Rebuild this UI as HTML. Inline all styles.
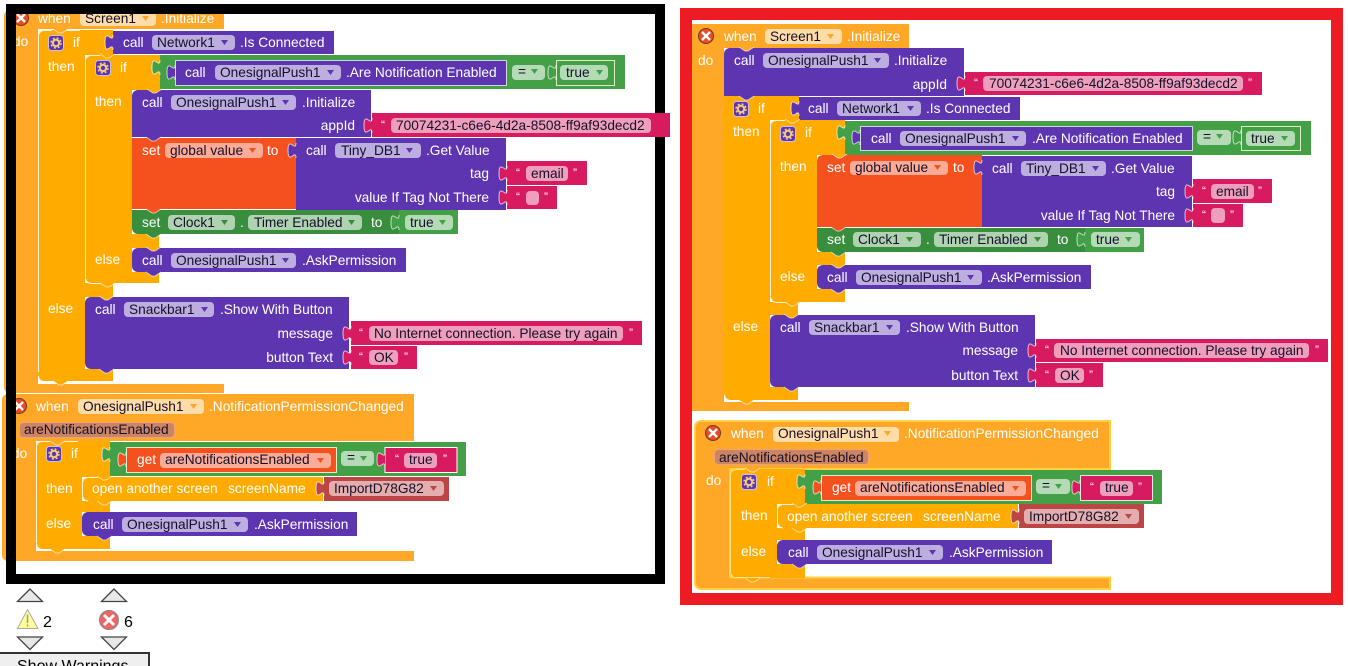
<!DOCTYPE html>
<html><head><meta charset="utf-8"><style>
html,body{margin:0;padding:0;background:#fff;width:1348px;height:666px;overflow:hidden}
svg{position:absolute;left:0;top:0;display:block}
text{font:13.7px "Liberation Sans",Arial,sans-serif;fill:#fff}
.d{fill:#14102a}
.e{text-anchor:end}
.q{font-size:12px}
.pu{fill:#bdaee0}.or{fill:#ffdca8}.pk{fill:#ef9fbc}.gr{fill:#b4dab6}.dg{fill:#afd2b1}.rd{fill:#fbab96}.ma{fill:#e4aeae}
.pa{fill:#cc8563;stroke:#eda27c}
.h{fill:none;stroke:#fff;stroke-opacity:.85;stroke-width:1}
.b{font-size:16px;fill:#000}
</style></head><body>
<svg width="1348" height="666" viewBox="0 0 1348 666" xmlns="http://www.w3.org/2000/svg">
<defs>
<path id="t" d="M0 0c0 10-8-8-8 7.500s8-2.500 8 7.500" stroke="#fff" stroke-opacity=".7"/>
<path id="n" d="M0 0l6 4h3l6-4" stroke="#fff" stroke-opacity=".6"/>
<path id="a" d="M0 0h7l-3.500 5z"/>
<g id="g"><rect x=".5" y=".5" width="15" height="15" rx="3" fill="#5e35b1" stroke="#cbbfe6"/><circle cx="8" cy="8" r="3.200" fill="none" stroke="#f3cf7e" stroke-width="2"/><circle cx="8" cy="8" r="5" fill="none" stroke="#f3cf7e" stroke-width="1.500" stroke-dasharray="2 2"/></g>
<g id="x"><circle r="7.500" fill="#ea4a25" stroke="#6e3a20"/><path d="M-4-4L4 4M4-4L-4 4" stroke="#fff" stroke-width="2.400"/></g>
</defs>

<!-- black frame -->
<rect x="11" y="9" width="649" height="570" fill="#fff" stroke="#000" stroke-width="10"/>
<!-- red frame -->
<rect x="686" y="14" width="651" height="585" fill="#fff" stroke="#ed1c24" stroke-width="12"/>

<!-- ===== LEFT GROUP ===== -->
<path fill="#ffa726" d="M4 16a6 6 0 0 1 6-6H224V29H38V384H224V393H10a6 6 0 0 1-6-6Z"/>
<path fill="#ffa726" d="M2 400a6 6 0 0 1 6-6H414V441H36V551H414V561H8a6 6 0 0 1-6-6Z"/>
<path fill="#ffab00" d="M38 36a6 6 0 0 1 6-6H113V55H85V283H113V297H85V369H113V381H44a6 6 0 0 1-6-6Z"/>
<path class="h" d="M38.500 372V36a5.500 5.500 0 0 1 5.500-5.500H52M66 30.500H80M44 382a6 6 0 0 1-5.500-6M44 381.500H72"/>
<path fill="#ffab00" d="M85 61a6 6 0 0 1 6-6H160V90H132V234H159V248H132V272H159V283H91a6 6 0 0 1-6-6Z"/>
<path class="h" d="M85.500 277V61a5.500 5.500 0 0 1 5.500-5.500H100M91 283.500a6 6 0 0 1-5.500-6M91 283.500H112"/>
<path fill="#ffab00" d="M36 447a6 6 0 0 1 6-6H110V477H82V501H110V512H82V536H110V549H42a6 6 0 0 1-6-6Z"/>
<path class="h" d="M36.500 543V447a5.500 5.500 0 0 1 5.500-5.500H50M64 441.500H78M42 549.500a6 6 0 0 1-5.500-6M42 549.500H70"/>

<text x="38" y="23">when</text>
<rect class="or" x="80" y="11" width="76" height="15" rx="4"/><text class="d" x="85" y="23">Screen1</text><use href="#a" x="142" y="16" fill="#ffa726"/>
<text x="161" y="23">.Initialize</text>
<text x="13" y="46">do</text>
<use href="#x" x="21" y="18"/>

<use href="#g" x="48" y="35"/><text x="73" y="47">if</text><text x="48" y="71">then</text><text x="48" y="313">else</text>
<rect x="113" y="31" width="221" height="23" fill="#5e35b1"/><use href="#t" x="113" y="35" fill="#5e35b1"/>
<text x="123" y="47">call</text><rect class="pu" x="152" y="35" width="83" height="15" rx="4"/><text class="d" x="157" y="47">Network1</text><use href="#a" x="221" y="40" fill="#5e35b1"/><text x="240" y="47">.Is Connected</text>

<use href="#g" x="95" y="60"/><text x="120" y="72">if</text><text x="95" y="106">then</text><text x="95" y="264">else</text>
<rect x="160" y="55" width="465" height="34" fill="#43a047"/><use href="#t" x="160" y="60" fill="#43a047"/>
<rect x="175.500" y="60.500" width="331" height="25" fill="#5e35b1" stroke="#cfd8dc"/><use href="#t" x="175" y="65" fill="#5e35b1"/>
<text x="185" y="77">call</text><rect class="pu" x="215" y="65" width="126" height="15" rx="4"/><text class="d" x="220" y="77">OnesignalPush1</text><use href="#a" x="327" y="70" fill="#5e35b1"/><text x="346" y="77">.Are Notification Enabled</text>
<rect class="gr" x="512" y="65" width="33" height="15" rx="4"/><text class="d" x="518" y="76">=</text><use href="#a" x="531" y="69" fill="#43a047"/>
<rect x="556.500" y="60.500" width="58" height="25" fill="#43a047" stroke="#dcedc8"/><use href="#t" x="556" y="65" fill="#43a047"/>
<rect class="gr" x="560" y="65" width="48" height="15" rx="4"/><text class="d" x="566" y="77">true</text><use href="#a" x="596" y="70" fill="#43a047"/>

<path fill="#5e35b1" d="M132 96a6 6 0 0 1 6-6H371V137H132Z"/>
<text x="142" y="107">call</text><rect class="pu" x="171" y="95" width="125" height="15" rx="4"/><text class="d" x="176" y="107">OnesignalPush1</text><use href="#a" x="282" y="100" fill="#5e35b1"/><text x="302" y="107">.Initialize</text>
<text class="e" x="355" y="130">appId</text>
<rect x="372" y="113" width="298" height="24" fill="#d81b60"/><use href="#t" x="372" y="118" fill="#d81b60"/>
<text class="q" x="381" y="129">“</text><rect class="pk" x="391" y="118" width="260" height="15" rx="4"/><text class="d" x="396" y="130">70074231-c6e6-4d2a-8508-ff9af93decd2</text>

<rect x="132" y="138" width="164" height="71" fill="#f4511e"/>
<text x="142" y="155">set</text><rect class="rd" x="165" y="143" width="98" height="15" rx="4"/><text class="d" x="170" y="155">global value</text><use href="#a" x="249" y="148" fill="#f4511e"/><text x="267" y="155">to</text>
<rect x="296" y="138" width="210" height="72" fill="#5e35b1"/><use href="#t" x="296" y="143" fill="#5e35b1"/>
<text x="306" y="155">call</text><rect class="pu" x="335" y="143" width="86" height="15" rx="4"/><text class="d" x="341" y="155">Tiny_DB1</text><use href="#a" x="406" y="148" fill="#5e35b1"/><text x="426" y="155">.Get Value</text>
<text class="e" x="489" y="178">tag</text><text class="e" x="489" y="202">value If Tag Not There</text>
<rect x="507" y="161" width="80" height="24" fill="#d81b60"/><use href="#t" x="507" y="166" fill="#d81b60"/>
<text class="q" x="516" y="177">“</text><rect class="pk" x="526" y="166" width="42" height="15" rx="4"/><text class="d" x="531" y="178">email</text><text class="q" x="573" y="177">”</text>
<rect x="507" y="186" width="50" height="23" fill="#d81b60"/><use href="#t" x="507" y="190" fill="#d81b60"/>
<text class="q" x="516" y="201">“</text><rect class="pk" x="526" y="191" width="13" height="14" rx="4"/><text class="q" x="544" y="201">”</text>

<path fill="#388e3c" d="M132 210H458V234H138a6 6 0 0 1-6-6Z"/>
<text x="142" y="227">set</text><rect class="dg" x="168" y="215" width="67" height="15" rx="4"/><text class="d" x="173" y="227">Clock1</text><use href="#a" x="221" y="220" fill="#388e3c"/><text x="240" y="227">.</text>
<rect class="dg" x="248" y="215" width="114" height="15" rx="4"/><text class="d" x="254" y="227">Timer Enabled</text><use href="#a" x="348" y="220" fill="#388e3c"/><text x="371" y="227">to</text>
<rect x="399" y="210" width="59" height="24" fill="#43a047"/><use href="#t" x="399" y="215" fill="#43a047"/><rect class="gr" x="405" y="215" width="48" height="15" rx="4"/><text class="d" x="410" y="227">true</text><use href="#a" x="439" y="220" fill="#43a047"/>

<path fill="#5e35b1" d="M132 254a6 6 0 0 1 6-6H406V272H138a6 6 0 0 1-6-6Z"/>
<text x="142" y="265">call</text><rect class="pu" x="171" y="253" width="125" height="15" rx="4"/><text class="d" x="176" y="265">OnesignalPush1</text><use href="#a" x="282" y="258" fill="#5e35b1"/><text x="302" y="265">.AskPermission</text>

<path fill="#5e35b1" d="M85 303a6 6 0 0 1 6-6H349V369H91a6 6 0 0 1-6-6Z"/>
<text x="95" y="314">call</text><rect class="pu" x="124" y="302" width="90" height="15" rx="4"/><text class="d" x="129" y="314">Snackbar1</text><use href="#a" x="201" y="307" fill="#5e35b1"/><text x="220" y="314">.Show With Button</text>
<text class="e" x="333" y="338">message</text><text class="e" x="333" y="362">button Text</text>
<rect x="351" y="321" width="291" height="24" fill="#d81b60"/><use href="#t" x="351" y="326" fill="#d81b60"/>
<text class="q" x="359" y="337">“</text><rect class="pk" x="369" y="326" width="254" height="15" rx="4"/><text class="d" x="374" y="338">No Internet connection. Please try again</text><text class="q" x="629" y="337">”</text>
<rect x="351" y="346" width="66" height="23" fill="#d81b60"/><use href="#t" x="351" y="350" fill="#d81b60"/>
<text class="q" x="359" y="361">“</text><rect class="pk" x="369" y="350" width="29" height="15" rx="4"/><text class="d" x="374" y="362">OK</text><text class="q" x="404" y="361">”</text>

<!-- left event 2 -->
<use href="#x" x="19" y="406"/>
<text x="36" y="411">when</text><rect class="or" x="78" y="399" width="126" height="15" rx="4"/><text class="d" x="83" y="411">OnesignalPush1</text><use href="#a" x="190" y="404" fill="#ffa726"/><text x="209" y="411">.NotificationPermissionChanged</text>
<rect class="pa" x="19.500" y="422.500" width="155" height="15" rx="4"/><text class="d" x="24" y="434">areNotificationsEnabled</text>
<text x="12" y="458">do</text>
<use href="#g" x="46" y="446"/><text x="71" y="458">if</text><text x="46" y="493">then</text><text x="46" y="528">else</text>
<rect x="110" y="442" width="356" height="34" fill="#43a047"/><use href="#t" x="110" y="447" fill="#43a047"/>
<rect x="126.500" y="447.500" width="210" height="25" fill="#f4511e" stroke="#dcedc8"/><use href="#t" x="126" y="452" fill="#f4511e"/>
<text x="137" y="464">get</text><rect class="rd" x="160" y="453" width="171" height="15" rx="4"/><text class="d" x="165" y="464">areNotificationsEnabled</text><use href="#a" x="317" y="458" fill="#f4511e"/>
<rect class="gr" x="341" y="451" width="33" height="15" rx="4"/><text class="d" x="347" y="462">=</text><use href="#a" x="360" y="456" fill="#43a047"/>
<rect x="385" y="447.500" width="72" height="25" fill="#d81b60" stroke="#fff"/><use href="#t" x="385" y="452" fill="#d81b60"/>
<text class="q" x="395" y="463">“</text><rect class="pk" x="404" y="453" width="33" height="15" rx="4"/><text class="d" x="409" y="464">true</text><text class="q" x="443" y="463">”</text>
<path fill="#ffab00" d="M82 483a6 6 0 0 1 6-6H323V501H88a6 6 0 0 1-6-6Z"/>
<path class="h" d="M82.500 495V483a5.500 5.500 0 0 1 5.500-5.500H98M88 501a6 6 0 0 1-5.500-6M323.500 477V501"/>
<text x="92" y="493">open another screen</text><text x="228" y="493">screenName</text>
<rect x="324" y="477" width="125" height="24" fill="#bc4545"/><use href="#t" x="324" y="481" fill="#bc4545"/>
<rect class="ma" x="329" y="481" width="115" height="15" rx="4"/><text class="d" x="334" y="493">ImportD78G82</text><use href="#a" x="430" y="486" fill="#bc4545"/>
<path fill="#5e35b1" d="M82 518a6 6 0 0 1 6-6H357V536H88a6 6 0 0 1-6-6Z"/>
<text x="93" y="529">call</text><rect class="pu" x="122" y="517" width="126" height="15" rx="4"/><text class="d" x="127" y="529">OnesignalPush1</text><use href="#a" x="234" y="522" fill="#5e35b1"/><text x="254" y="529">.AskPermission</text>

<!-- left notches -->
<use href="#n" x="53" y="29" fill="#ffa726"/>
<use href="#n" x="100" y="54" fill="#ffab00"/>
<use href="#n" x="147" y="89" fill="#ffab00"/>
<use href="#n" x="146" y="137" fill="#5e35b1"/>
<use href="#n" x="146" y="209" fill="#f4511e"/>
<use href="#n" x="146" y="234" fill="#388e3c"/>
<use href="#n" x="146" y="247" fill="#ffab00"/>
<use href="#n" x="146" y="272" fill="#5e35b1"/>
<use href="#n" x="100" y="283" fill="#ffab00"/>
<use href="#n" x="99" y="296" fill="#ffab00"/>
<use href="#n" x="99" y="369" fill="#5e35b1"/>
<use href="#n" x="53" y="381" fill="#ffab00"/>
<use href="#n" x="50" y="441" fill="#ffa726"/>
<use href="#n" x="97" y="476" fill="#ffab00"/>
<use href="#n" x="97" y="501" fill="#ffab00"/>
<use href="#n" x="97" y="536" fill="#5e35b1"/>
<use href="#n" x="50" y="549" fill="#ffab00"/>

<!-- black left/top on top -->
<rect x="6" y="4" width="10" height="580" fill="#000"/>
<rect x="6" y="4" width="659" height="10" fill="#000"/>

<!-- ===== RIGHT GROUP ===== -->
<path fill="#ffa726" d="M692 24H909V48H724V402H909V411H692Z"/>
<path fill="#ffa726" stroke="#ffd040" stroke-width="2" d="M701 421H1110V469H730V577.500H1110V589H701a6 6 0 0 1-6-6V427a6 6 0 0 1 6-6Z"/>
<path fill="#ffab00" d="M724 96H799V120H770V302H798V315H770V387H798V400H730a6 6 0 0 1-6-6Z"/>
<path class="h" d="M730 400.500a6 6 0 0 1-5.500-6M730 400.500H758"/>
<path fill="#ffab00" d="M770 126a6 6 0 0 1 6-6H845V155H817V252H845V265H817V289H845V302H776a6 6 0 0 1-6-6Z"/>
<path class="h" d="M770.500 296V126a5.500 5.500 0 0 1 5.500-5.500H785M776 302.500a6 6 0 0 1-5.500-6M776 302.500H797"/>
<path fill="#ffab00" d="M730 475a6 6 0 0 1 6-6H805V504H777V528H805V540H777V564H805V578H736a6 6 0 0 1-6-6Z"/>
<path fill="none" stroke="#ffe082" stroke-width="1" d="M730.500 572V475a5.500 5.500 0 0 1 5.500-5.500H745M736 578a6 6 0 0 1-5.500-6M736 577.500H770"/>

<use href="#x" x="706" y="36"/>
<text x="724" y="41">when</text><rect class="or" x="765" y="29" width="77" height="15" rx="4"/><text class="d" x="770" y="41">Screen1</text><use href="#a" x="827" y="34" fill="#ffa726"/><text x="847" y="41">.Initialize</text>
<text x="698" y="65">do</text>

<path fill="#5e35b1" d="M724 54a6 6 0 0 1 6-6H964V96H724Z"/>
<text x="734" y="65">call</text><rect class="pu" x="763" y="53" width="126" height="15" rx="4"/><text class="d" x="768" y="65">OnesignalPush1</text><use href="#a" x="874" y="58" fill="#5e35b1"/><text x="894" y="65">.Initialize</text>
<text class="e" x="947" y="89">appId</text>
<rect x="965" y="72" width="297" height="23" fill="#d81b60"/><use href="#t" x="965" y="76" fill="#d81b60"/>
<text class="q" x="974" y="87">“</text><rect class="pk" x="983" y="76" width="260" height="15" rx="4"/><text class="d" x="989" y="88">70074231-c6e6-4d2a-8508-ff9af93decd2</text><text class="q" x="1248" y="87">”</text>

<use href="#g" x="733" y="101"/><text x="758" y="113">if</text><text x="733" y="136">then</text><text x="733" y="331">else</text>
<rect x="799" y="97" width="221" height="23" fill="#5e35b1"/><use href="#t" x="799" y="101" fill="#5e35b1"/>
<text x="808" y="113">call</text><rect class="pu" x="837" y="101" width="84" height="15" rx="4"/><text class="d" x="842" y="113">Network1</text><use href="#a" x="907" y="106" fill="#5e35b1"/><text x="926" y="113">.Is Connected</text>

<use href="#g" x="780" y="126"/><text x="805" y="137">if</text><text x="780" y="171">then</text><text x="780" y="281">else</text>
<rect x="845" y="121" width="466" height="34" fill="#43a047"/><use href="#t" x="845" y="125" fill="#43a047"/>
<rect x="860.500" y="126.500" width="332" height="24" fill="#5e35b1" stroke="#cfd8dc"/><use href="#t" x="860" y="130" fill="#5e35b1"/>
<text x="871" y="143">call</text><rect class="pu" x="900" y="131" width="126" height="15" rx="4"/><text class="d" x="905" y="143">OnesignalPush1</text><use href="#a" x="1012" y="136" fill="#5e35b1"/><text x="1032" y="143">.Are Notification Enabled</text>
<rect class="gr" x="1197" y="130" width="34" height="15" rx="4"/><text class="d" x="1203" y="141">=</text><use href="#a" x="1216" y="134" fill="#43a047"/>
<rect x="1241.500" y="126.500" width="59" height="24" fill="#43a047" stroke="#dcedc8"/><use href="#t" x="1241" y="130" fill="#43a047"/>
<rect class="gr" x="1246" y="131" width="49" height="15" rx="4"/><text class="d" x="1251" y="143">true</text><use href="#a" x="1281" y="136" fill="#43a047"/>

<path fill="#f4511e" d="M817 161a6 6 0 0 1 6-6H982V227H817Z"/>
<text x="827" y="172">set</text><rect class="rd" x="850" y="161" width="98" height="14" rx="4"/><text class="d" x="855" y="172">global value</text><use href="#a" x="934" y="165" fill="#f4511e"/><text x="953" y="172">to</text>
<rect x="982" y="156" width="210" height="71" fill="#5e35b1"/><use href="#t" x="982" y="160" fill="#5e35b1"/>
<text x="992" y="173">call</text><rect class="pu" x="1021" y="161" width="85" height="15" rx="4"/><text class="d" x="1026" y="173">Tiny_DB1</text><use href="#a" x="1092" y="166" fill="#5e35b1"/><text x="1111" y="173">.Get Value</text>
<text class="e" x="1175" y="196">tag</text><text class="e" x="1175" y="220">value If Tag Not There</text>
<rect x="1193" y="179" width="79" height="24" fill="#d81b60"/><use href="#t" x="1193" y="184" fill="#d81b60"/>
<text class="q" x="1202" y="195">“</text><rect class="pk" x="1211" y="184" width="43" height="15" rx="4"/><text class="d" x="1216" y="196">email</text><text class="q" x="1258" y="195">”</text>
<rect x="1193" y="204" width="50" height="23" fill="#d81b60"/><use href="#t" x="1193" y="208" fill="#d81b60"/>
<text class="q" x="1202" y="219">“</text><rect class="pk" x="1211" y="208" width="14" height="15" rx="4"/><text class="q" x="1230" y="219">”</text>

<path fill="#388e3c" d="M817 228H1144V252H823a6 6 0 0 1-6-6Z"/>
<text x="827" y="244">set</text><rect class="dg" x="853" y="232" width="68" height="15" rx="4"/><text class="d" x="858" y="244">Clock1</text><use href="#a" x="906" y="237" fill="#388e3c"/><text x="926" y="244">.</text>
<rect class="dg" x="934" y="232" width="114" height="15" rx="4"/><text class="d" x="939" y="244">Timer Enabled</text><use href="#a" x="1034" y="237" fill="#388e3c"/><text x="1057" y="244">to</text>
<rect x="1085" y="228" width="59" height="24" fill="#43a047"/><use href="#t" x="1085" y="232" fill="#43a047"/><rect class="gr" x="1091" y="232" width="49" height="15" rx="4"/><text class="d" x="1096" y="244">true</text><use href="#a" x="1125" y="237" fill="#43a047"/>

<path fill="#5e35b1" d="M817 271a6 6 0 0 1 6-6H1091V289H823a6 6 0 0 1-6-6Z"/>
<text x="827" y="282">call</text><rect class="pu" x="856" y="270" width="126" height="15" rx="4"/><text class="d" x="861" y="282">OnesignalPush1</text><use href="#a" x="967" y="275" fill="#5e35b1"/><text x="987" y="282">.AskPermission</text>

<path fill="#5e35b1" d="M770 321a6 6 0 0 1 6-6H1035V387H776a6 6 0 0 1-6-6Z"/>
<text x="780" y="332">call</text><rect class="pu" x="809" y="320" width="91" height="15" rx="4"/><text class="d" x="814" y="332">Snackbar1</text><use href="#a" x="886" y="325" fill="#5e35b1"/><text x="906" y="332">.Show With Button</text>
<text class="e" x="1018" y="355">message</text><text class="e" x="1018" y="380">button Text</text>
<rect x="1036" y="339" width="292" height="23" fill="#d81b60"/><use href="#t" x="1036" y="343" fill="#d81b60"/>
<text class="q" x="1045" y="354">“</text><rect class="pk" x="1054" y="343" width="255" height="15" rx="4"/><text class="d" x="1060" y="355">No Internet connection. Please try again</text><text class="q" x="1315" y="354">”</text>
<rect x="1036" y="363" width="67" height="24" fill="#d81b60"/><use href="#t" x="1036" y="368" fill="#d81b60"/>
<text class="q" x="1045" y="379">“</text><rect class="pk" x="1055" y="368" width="29" height="15" rx="4"/><text class="d" x="1060" y="380">OK</text><text class="q" x="1089" y="379">”</text>

<!-- right event 2 -->
<use href="#x" x="713" y="433"/>
<text x="731" y="438">when</text><rect class="or" x="773" y="427" width="126" height="15" rx="4"/><text class="d" x="778" y="438">OnesignalPush1</text><use href="#a" x="884" y="431" fill="#ffa726"/><text x="904" y="438">.NotificationPermissionChanged</text>
<rect class="pa" x="714.500" y="449.500" width="154" height="15" rx="4"/><text class="d" x="719" y="462">areNotificationsEnabled</text>
<text x="706" y="485">do</text>
<use href="#g" x="741" y="474"/><text x="767" y="486">if</text><text x="741" y="520">then</text><text x="741" y="556">else</text>
<rect x="805" y="470" width="357" height="34" fill="#43a047"/><use href="#t" x="805" y="474" fill="#43a047"/>
<rect x="821.500" y="475.500" width="210" height="25" fill="#f4511e" stroke="#dcedc8"/><use href="#t" x="821" y="480" fill="#f4511e"/>
<text x="832" y="492">get</text><rect class="rd" x="855" y="481" width="171" height="15" rx="4"/><text class="d" x="860" y="492">areNotificationsEnabled</text><use href="#a" x="1012" y="486" fill="#f4511e"/>
<rect class="gr" x="1036" y="479" width="34" height="15" rx="4"/><text class="d" x="1042" y="490">=</text><use href="#a" x="1055" y="484" fill="#43a047"/>
<rect x="1080.500" y="475.500" width="72" height="25" fill="#d81b60" stroke="#dfe6e9"/><use href="#t" x="1080" y="480" fill="#d81b60"/>
<text class="q" x="1090" y="491">“</text><rect class="pk" x="1100" y="481" width="33" height="15" rx="4"/><text class="d" x="1105" y="492">true</text><text class="q" x="1138" y="491">”</text>
<path fill="#ffab00" d="M777 510a6 6 0 0 1 6-6H1018V528H783a6 6 0 0 1-6-6Z"/>
<path class="h" d="M777.500 522V510a5.500 5.500 0 0 1 5.500-5.500H793M783 528a6 6 0 0 1-5.500-6M1018.500 504V528"/>
<text x="787" y="521">open another screen</text><text x="923" y="521">screenName</text>
<rect x="1019" y="504" width="125" height="24" fill="#bc4545"/><use href="#t" x="1019" y="509" fill="#bc4545"/>
<rect class="ma" x="1024" y="509" width="115" height="15" rx="4"/><text class="d" x="1029" y="521">ImportD78G82</text><use href="#a" x="1125" y="514" fill="#bc4545"/>
<path fill="#5e35b1" d="M777 546a6 6 0 0 1 6-6H1052V564H783a6 6 0 0 1-6-6Z"/>
<text x="788" y="557">call</text><rect class="pu" x="817" y="545" width="126" height="15" rx="4"/><text class="d" x="822" y="557">OnesignalPush1</text><use href="#a" x="929" y="550" fill="#5e35b1"/><text x="949" y="557">.AskPermission</text>

<!-- right notches -->
<use href="#n" x="739" y="47" fill="#ffa726"/>
<use href="#n" x="739" y="96" fill="#5e35b1"/>
<use href="#n" x="785" y="119" fill="#ffab00"/>
<use href="#n" x="832" y="154" fill="#ffab00"/>
<use href="#n" x="831" y="227" fill="#f4511e"/>
<use href="#n" x="831" y="252" fill="#388e3c"/>
<use href="#n" x="831" y="264" fill="#ffab00"/>
<use href="#n" x="831" y="289" fill="#5e35b1"/>
<use href="#n" x="785" y="302" fill="#ffab00"/>
<use href="#n" x="784" y="314" fill="#ffab00"/>
<use href="#n" x="784" y="387" fill="#5e35b1"/>
<use href="#n" x="739" y="400" fill="#ffab00"/>
<use href="#n" x="745" y="468" fill="#ffa726"/>
<use href="#n" x="792" y="503" fill="#ffab00"/>
<use href="#n" x="792" y="528" fill="#ffab00"/>
<use href="#n" x="792" y="564" fill="#5e35b1"/>
<use href="#n" x="745" y="578" fill="#ffab00"/>

<!-- ===== bottom-left counters ===== -->
<path d="M30 589L17.500 601.500H42.500Z" fill="#e8e8e8" stroke="#444" stroke-width="1.300"/>
<path d="M114 589L101.500 601.500H126.500Z" fill="#e8e8e8" stroke="#444" stroke-width="1.300"/>
<path d="M27.500 609.500L17.500 628.500H38L27.500 609.500Z" fill="#ffff99" stroke="#aaa"/>
<path d="M27.500 614.500V623M27.500 624.500V626.500" stroke="#999" stroke-width="1.500"/>
<text class="b" x="43" y="627">2</text>
<circle cx="109" cy="620" r="9.500" fill="#ef6464" stroke="#888"/>
<path d="M104 615L114 625M114 615L104 625" stroke="#fff" stroke-width="3"/>
<text class="b" x="124" y="627">6</text>
<path d="M17.500 637H42.500L30 649.500Z" fill="#e8e8e8" stroke="#444" stroke-width="1.300"/>
<path d="M101.500 637H126.500L114 649.500Z" fill="#e8e8e8" stroke="#444" stroke-width="1.300"/>
<rect x="-2" y="653" width="151" height="20" fill="#efefef" stroke="#333" stroke-width="2"/>
<text class="b" x="17" y="671">Show Warnings</text>
</svg>
</body></html>
